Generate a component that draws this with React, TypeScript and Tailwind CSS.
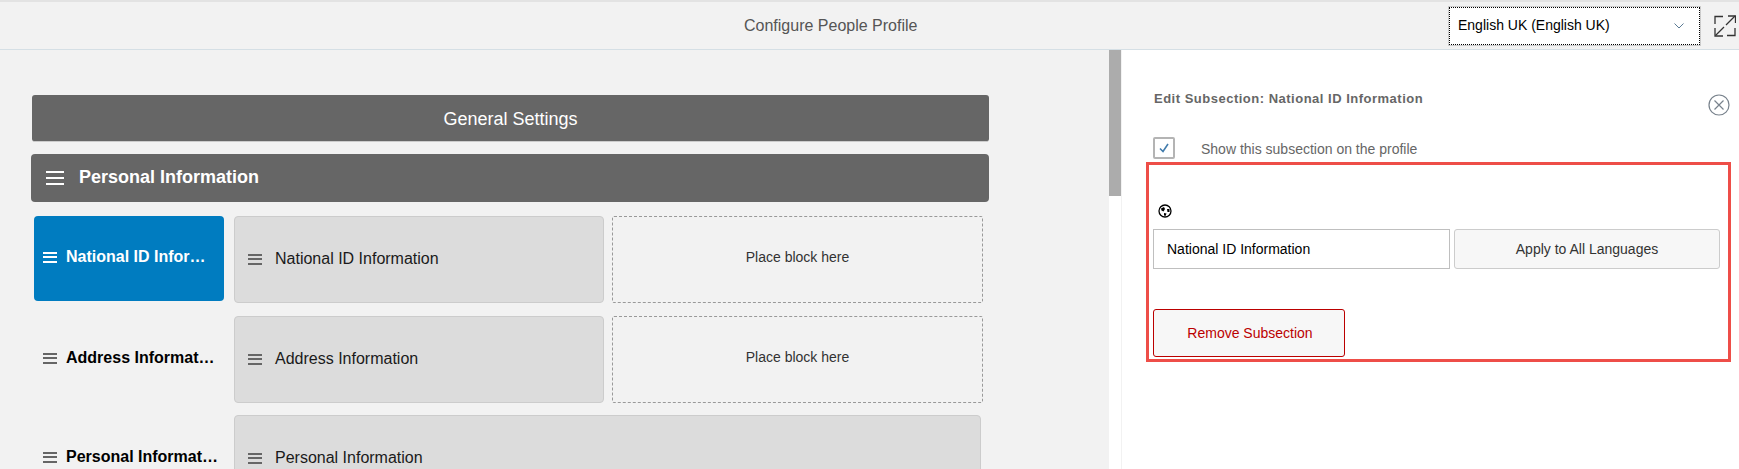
function MenuIcon({ className, width, height }: { className: string; width: string; height: string }) {
  return (
    <div className={`flex flex-col justify-between shrink-0 ${width} ${height}`}>
      <div className={`h-[2px] ${className}`} />
      <div className={`h-[2px] ${className}`} />
      <div className={`h-[2px] ${className}`} />
    </div>
  );
}

function SideLabel({ label, active }: { label: string; active?: boolean }) {
  return (
    <div
      className={`w-[190px] shrink-0 flex items-center gap-[9px] pl-[9px] pr-2 pb-[3px] rounded-[4px] font-bold text-[16px] self-start ${
        active ? 'h-[85px] bg-[#007cc0] text-white' : 'h-[87px] text-black'
      }`}
    >
      <MenuIcon width="w-[14px]" height="h-[11px]" className={active ? 'bg-white' : 'bg-[#666666]'} />
      <span className="whitespace-nowrap">{label}</span>
    </div>
  );
}

function Block({ label, className }: { label: string; className: string }) {
  return (
    <div className={`h-[87px] shrink-0 flex items-center gap-[13px] pl-[13px] pb-[1px] bg-[#dcdcdc] border border-[#cccccc] rounded-[4px] text-[16px] text-[#1a1a1a] ${className}`}>
      <MenuIcon width="w-[14px]" height="h-[11px]" className="bg-[#666666]" />
      <span>{label}</span>
    </div>
  );
}

function Placeholder() {
  return (
    <div className="w-[371px] h-[87px] shrink-0 flex items-center justify-center pb-[5px] border border-dashed border-[#999999] rounded-[2px] text-[14px] text-[#333333]">
      Place block here
    </div>
  );
}

export default function App() {
  return (
    <div className="w-[1739px] h-[469px] overflow-hidden flex flex-col bg-white font-['Liberation_Sans',Arial,sans-serif]">
      <div className="h-[2px] bg-[#e3e3e3]" />
      <header className="relative h-[48px] shrink-0 flex items-center justify-end bg-[#f2f2f2] border-b border-[#d5dfe5]">
        <span className="absolute left-[744px] top-[15px] text-[16px] leading-[18px] text-[#555555]">Configure People Profile</span>
        <div className="w-[251px] h-[38px] mr-[14px] flex items-center justify-between pl-[8px] pr-[15px] bg-white border border-dotted border-black outline outline-1 outline-[#cccccc] text-[14px] text-black">
          <span>English UK (English UK)</span>
          <svg width="10" height="6" viewBox="0 0 10 6" fill="none" stroke="#5a7a94" strokeWidth="1">
            <path d="M0.5 0.5 5 5 9.5 0.5" />
          </svg>
        </div>
        <svg className="mr-[3px] shrink-0" width="22" height="22" viewBox="0 0 22 22" fill="none" stroke="#333333" strokeWidth="1.3">
          <path d="M1 9V1.5H9" />
          <path d="M21 13V20.5H13" />
          <path d="M12 10 21 1" />
          <path d="M14 1H21.5V8" />
          <path d="M1.5 20.5 10 12" />
          <path d="M1 13V21H9" />
        </svg>
      </header>

      <div className="flex-1 flex min-h-0">
        <main className="w-[1109px] shrink-0 bg-[#f2f2f2] pt-[45px] overflow-hidden">
          <div className="ml-[32px] w-[957px] h-[47px] flex items-center justify-center pt-[2px] bg-[#666666] border-b border-[#cccccc] rounded-[3px] text-[18px] text-white">
            General Settings
          </div>
          <div className="ml-[31px] mt-[12px] w-[958px] h-[48px] flex items-center gap-[15px] pl-[15px] pb-[1px] bg-[#666666] rounded-[4px] text-[18px] font-bold text-white">
            <MenuIcon width="w-[18px]" height="h-[14px]" className="bg-white" />
            <span>Personal Information</span>
          </div>
          <div className="ml-[34px] mt-[14px] flex flex-col">
            <div className="flex">
              <SideLabel label="National ID Infor…" active />
              <Block label="National ID Information" className="ml-[10px] w-[370px]" />
              <div className="ml-[8px]"><Placeholder /></div>
            </div>
            <div className="flex mt-[13px]">
              <SideLabel label="Address Informat…" />
              <Block label="Address Information" className="ml-[10px] w-[370px]" />
              <div className="ml-[8px]"><Placeholder /></div>
            </div>
            <div className="flex mt-[12px]">
              <SideLabel label="Personal Informat…" />
              <Block label="Personal Information" className="ml-[10px] w-[747px]" />
            </div>
          </div>
        </main>

        <div className="w-[12px] shrink-0 bg-white">
          <div className="h-[146px] bg-[#acacac]" />
        </div>

        <aside className="flex-1 pl-[24px] border-l border-[#f2f2f2] relative">
          <div className="pl-[8px] pt-[41px] pr-[9px] flex items-start justify-between">
            <h2 className="text-[13px] leading-[15px] font-bold text-[#666666] tracking-[0.5px]">Edit Subsection: National ID Information</h2>
            <svg className="mt-[3px] shrink-0" width="22" height="22" viewBox="0 0 22 22" fill="none" stroke="#78828c" strokeWidth="1.2">
              <circle cx="11" cy="11" r="10" />
              <path d="M6.5 6.5 15.5 15.5M15.5 6.5 6.5 15.5" />
            </svg>
          </div>
          <div className="pl-[7px] mt-[21px] flex items-center gap-[26px] h-[22px]">
            <div className="w-[22px] h-[22px] flex items-center justify-center border-2 border-[#b4b4b4] rounded-[2px]">
              <svg width="12" height="12" viewBox="0 0 12 12" fill="none" stroke="#427cac" strokeWidth="1.6">
                <path d="M2 6.5 5 9.5 10 2" />
              </svg>
            </div>
            <span className="mt-[2px] text-[14px] text-[#666666]">Show this subsection on the profile</span>
          </div>

          <section className="w-[585px] h-[200px] mt-[3px] border-[3px] border-[#ee4e48] pl-[4px] pt-[39px]">
            <svg className="ml-[5px]" width="14" height="14" viewBox="0 0 14 14">
              <circle cx="7" cy="7" r="6" fill="white" stroke="black" strokeWidth="1.3" />
              <path d="M3 4.5 6 3 7 5 5.5 7.5 3.5 6.5Z" fill="black" />
              <path d="M9 5 11.5 5 11.5 8 9.5 8Z" fill="black" />
              <path d="M6 9 8.5 9.5 7.5 12 6 11.5Z" fill="black" />
            </svg>
            <div className="mt-[11px] flex gap-[4px]">
              <div className="w-[297px] h-[40px] flex items-center pl-[13px] bg-white border border-[#bfbfbf] text-[14px] text-black">
                National ID Information
              </div>
              <button className="w-[266px] h-[40px] bg-[#f7f7f7] border border-[#cccccc] rounded-[3px] text-[14px] text-[#333333]">
                Apply to All Languages
              </button>
            </div>
            <button className="mt-[40px] w-[192px] h-[48px] pl-[2px] bg-[#f7f7f7] border border-[#bb0000] rounded-[3px] text-[14px] text-[#bb0000]">
              Remove Subsection
            </button>
          </section>
        </aside>
      </div>
    </div>
  );
}
